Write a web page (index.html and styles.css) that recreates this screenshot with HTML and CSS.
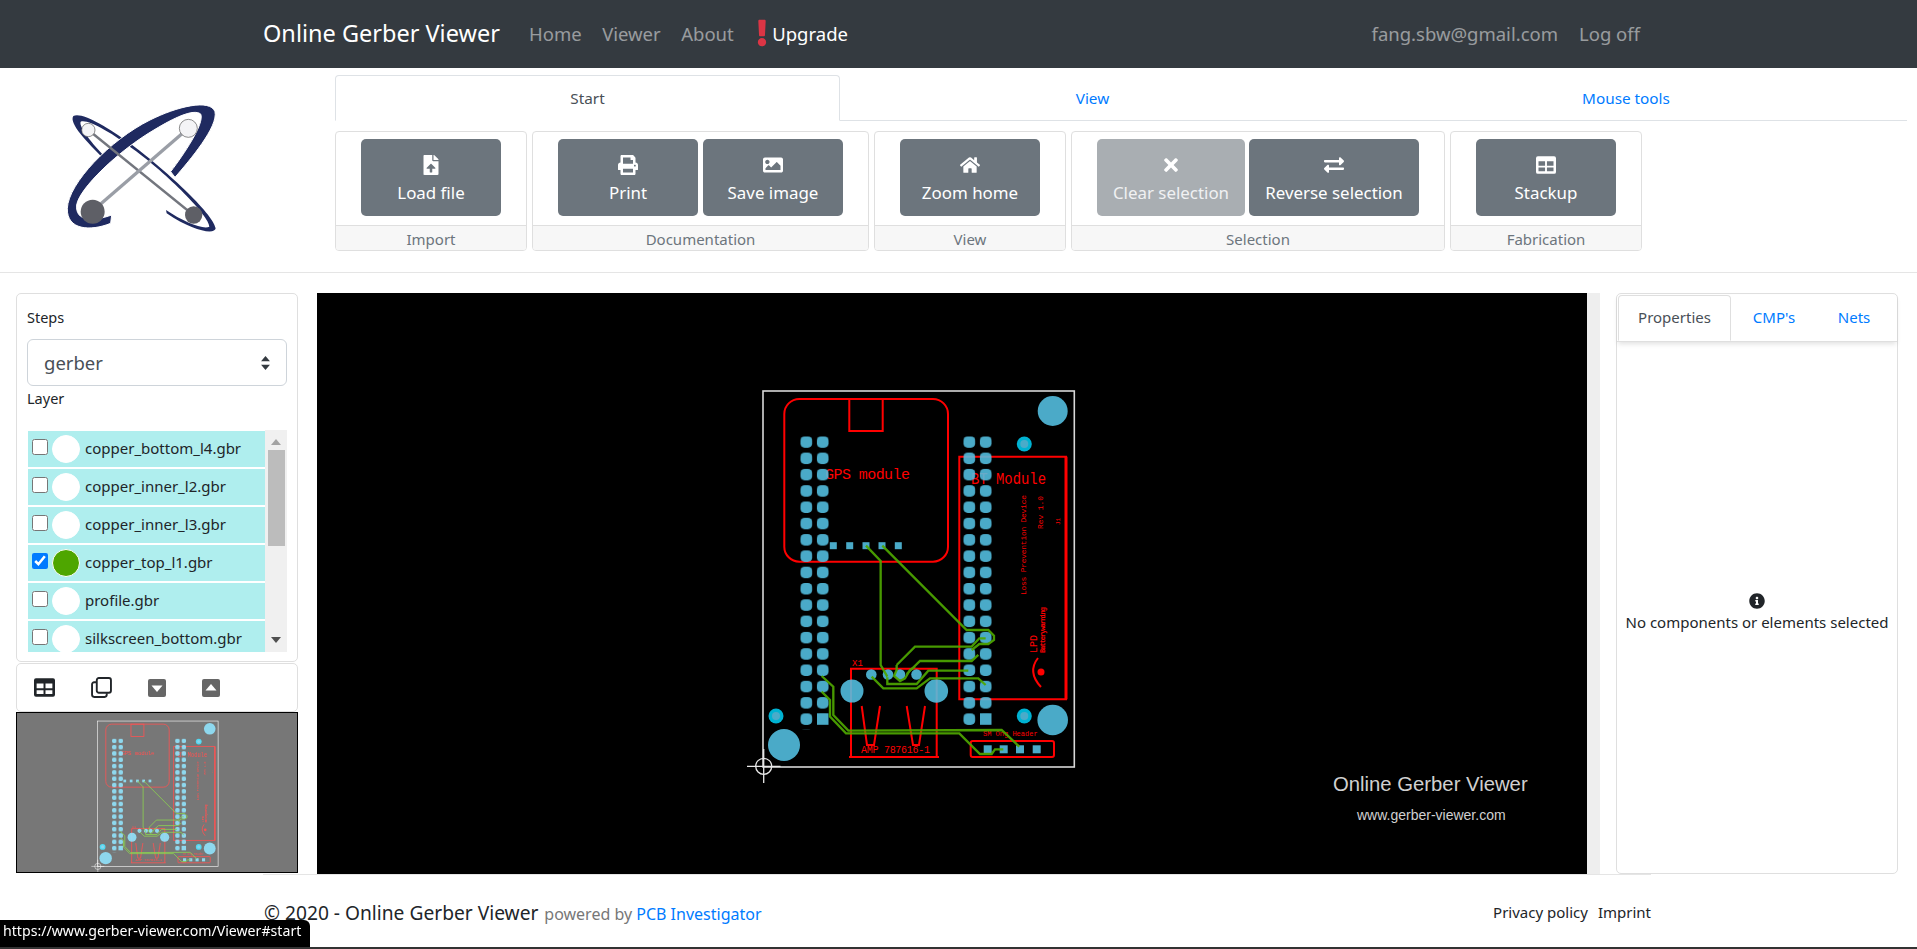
FILE: index.html
```html
<!DOCTYPE html>
<html lang="en">
<head>
  <meta charset="UTF-8">
  <meta name="viewport" content="width=device-width, initial-scale=1.0">
  <title>Online Gerber Viewer</title>
  <link rel="stylesheet" href="styles.css">
</head>
<body>
  <svg class="sprites" width="0" height="0">
    <symbol id="i-table" viewBox="0 0 512 512"><path fill-rule="evenodd" d="M48 32h416a48 48 0 0 1 48 48v352a48 48 0 0 1-48 48H48a48 48 0 0 1-48-48V80a48 48 0 0 1 48-48zM64 160v112h168V160zM280 160v112h168V160zM64 320v96h168v-96zM280 320v96h168v-96z"/></symbol>
  </svg>

  <header class="navbar">
    <a class="brand" href="#">Online Gerber Viewer</a>
    <nav class="nav-links">
      <a href="#">Home</a>
      <a href="#">Viewer</a>
      <a href="#">About</a>
      <a class="upgrade" href="#">
        <svg viewBox="0 0 192 512" width="10" height="28"><path fill="#dc3545" d="M176 432c0 44.112-35.888 80-80 80s-80-35.888-80-80 35.888-80 80-80 80 35.888 80 80zM25.26 25.199l13.6 272C39.499 309.972 50.041 320 62.83 320h66.34c12.789 0 23.331-10.028 23.97-22.801l13.6-272C167.425 11.49 156.496 0 142.77 0H49.23C35.504 0 24.575 11.49 25.26 25.199z"/></svg>
        Upgrade
      </a>
    </nav>
    <nav class="nav-user">
      <a href="#">fang.sbw@gmail.com</a>
      <a href="#">Log off</a>
    </nav>
  </header>

  <section class="toolbar">
    <div class="logo">
      <svg viewBox="0 0 570 480" width="190" height="160">
        <path fill="#1f2a60" d="M160 205C115 160 55 100 70 78C95 65 170 110 240 160C340 235 490 370 497 415C495 435 430 425 350 370L348 360C400 395 460 420 478 410C480 380 350 250 250 178C190 130 110 85 92 95C85 110 130 165 165 200Z"/>
        <path fill="#1f2a60" stroke="#fff" stroke-width="3" d="M185 375L182 400C120 425 50 420 52 355C55 280 180 150 300 90C380 50 480 25 495 65C505 110 420 210 375 262L362 245C400 195 465 100 452 72C430 55 370 85 315 118C205 182 88 295 80 345C75 395 130 395 185 375Z"/>
        <path stroke="#73767e" stroke-width="7" d="M115 120L430 375"/>
        <path stroke="#9a9ea6" stroke-width="10" d="M415 115L125 365"/>
        <circle cx="115" cy="120" r="20" fill="#f4f4f6" stroke="#555" stroke-width="2"/>
        <circle cx="415" cy="115" r="27" fill="#f4f4f6" stroke="#555" stroke-width="2"/>
        <circle cx="128" cy="365" r="36" fill="#5e5f66"/>
        <circle cx="431" cy="375" r="26" fill="#5e5f66"/>
      </svg>
    </div>
    <div class="ribbon">
      <ul class="tabs">
        <li class="tab tab-active">Start</li>
        <li class="tab"><a href="#">View</a></li>
        <li class="tab tab-last"><a href="#">Mouse tools</a></li>
      </ul>
      <div class="groups">
        <div class="group group-import">
          <div class="group-body">
            <button class="tool"><svg class="tool-icon" viewBox="0 0 384 512"><path d="M224 136V0H24C10.7 0 0 10.7 0 24v464c0 13.3 10.7 24 24 24h336c13.3 0 24-10.7 24-24V160H248c-13.2 0-24-10.8-24-24zm65.18 216.01H224v80c0 8.84-7.16 16-16 16h-32c-8.84 0-16-7.16-16-16v-80H94.82c-14.28 0-21.41-17.29-11.27-27.36l96.42-95.7c6.65-6.61 17.39-6.61 24.04 0l96.42 95.7c10.15 10.07 3.03 27.36-11.25 27.36zM377 105L279.1 7c-4.5-4.5-10.6-7-17-7H256v128h128v-6.1c0-6.3-2.5-12.4-7-16.9z"/></svg>Load file</button>
          </div>
          <div class="group-title">Import</div>
        </div>
        <div class="group group-doc">
          <div class="group-body">
            <button class="tool"><svg class="tool-icon" viewBox="0 0 512 512"><path d="M448 192V77.25c0-8.49-3.37-16.62-9.37-22.63L393.37 9.37c-6-6-14.14-9.37-22.63-9.37H96C78.33 0 64 14.33 64 32v160c-35.35 0-64 28.65-64 64v112c0 8.84 7.16 16 16 16h48v96c0 17.67 14.33 32 32 32h320c17.67 0 32-14.33 32-32v-96h48c8.84 0 16-7.16 16-16V256c0-35.35-28.65-64-64-64zm-64 256H128v-96h256v96zm0-224H128V64h192v48c0 8.84 7.16 16 16 16h48v96zm48 72c-13.25 0-24-10.75-24-24 0-13.26 10.75-24 24-24s24 10.74 24 24c0 13.25-10.75 24-24 24z"/></svg>Print</button>
            <button class="tool"><svg class="tool-icon" viewBox="0 0 512 512"><path d="M464 448H48c-26.51 0-48-21.49-48-48V112c0-26.51 21.49-48 48-48h416c26.51 0 48 21.49 48 48v288c0 26.51-21.49 48-48 48zM112 120c-30.928 0-56 25.072-56 56s25.072 56 56 56 56-25.072 56-56-25.072-56-56-56zM64 384h384V272l-87.515-87.515c-4.686-4.686-12.284-4.686-16.971 0L208 320l-55.515-55.515c-4.686-4.686-12.284-4.686-16.971 0L64 336v48z"/></svg>Save image</button>
          </div>
          <div class="group-title">Documentation</div>
        </div>
        <div class="group group-view">
          <div class="group-body">
            <button class="tool"><svg class="tool-icon" viewBox="0 0 576 512"><path d="M280.37 148.26L96 300.11V464a16 16 0 0 0 16 16l112.06-.29a16 16 0 0 0 15.92-16V368a16 16 0 0 1 16-16h64a16 16 0 0 1 16 16v95.64a16 16 0 0 0 16 16.05L464 480a16 16 0 0 0 16-16V300L295.67 148.26a12.19 12.19 0 0 0-15.3 0zM571.6 251.47L488 182.56V44.05a12 12 0 0 0-12-12h-56a12 12 0 0 0-12 12v72.61L318.47 43a48 48 0 0 0-61 0L4.34 251.47a12 12 0 0 0-1.6 16.9l25.5 31A12 12 0 0 0 45.15 301l235.22-193.74a12.19 12.19 0 0 1 15.3 0L530.9 301a12 12 0 0 0 16.9-1.6l25.5-31a12 12 0 0 0-1.7-16.93z"/></svg>Zoom home</button>
          </div>
          <div class="group-title">View</div>
        </div>
        <div class="group group-sel">
          <div class="group-body">
            <button class="tool tool-clear"><svg class="tool-icon" viewBox="0 0 352 512"><path d="M242.72 256l100.07-100.07c12.28-12.28 12.28-32.19 0-44.48l-22.24-22.24c-12.28-12.28-32.19-12.28-44.48 0L176 189.28 75.93 89.21c-12.28-12.28-32.19-12.28-44.48 0L9.21 111.45c-12.28 12.28-12.28 32.19 0 44.48L109.28 256 9.21 356.07c-12.28 12.28-12.28 32.19 0 44.48l22.24 22.24c12.28 12.28 32.2 12.28 44.48 0L176 322.72l100.07 100.07c12.28 12.28 32.2 12.28 44.48 0l22.24-22.24c12.28-12.28 12.28-32.19 0-44.48L242.72 256z"/></svg>Clear selection</button>
            <button class="tool tool-reverse"><svg class="tool-icon" viewBox="0 0 512 512"><path d="M0 168v-16c0-13.255 10.745-24 24-24h360V80c0-21.367 25.899-32.042 40.971-16.971l80 80c9.372 9.373 9.372 24.569 0 33.941l-80 80C409.956 271.982 384 261.456 384 240v-48H24c-13.255 0-24-10.745-24-24zm488 152H128v-48c0-21.314-25.862-32.08-40.971-16.971l-80 80c-9.372 9.373-9.372 24.569 0 33.941l80 80C102.057 463.997 128 453.437 128 432v-48h360c13.255 0 24-10.745 24-24v-16c0-13.255-10.745-24-24-24z"/></svg>Reverse selection</button>
          </div>
          <div class="group-title">Selection</div>
        </div>
        <div class="group group-fab">
          <div class="group-body">
            <button class="tool"><svg class="tool-icon"><use href="#i-table"/></svg>Stackup</button>
          </div>
          <div class="group-title">Fabrication</div>
        </div>
      </div>
    </div>
  </section>

  <main class="workspace">
    <aside class="side-left">
      <div class="card layers-card">
        <div class="field-label">Steps</div>
        <div class="select">
          <span>gerber</span>
          <svg viewBox="0 0 12 18" width="11" height="16"><path fill="#343a40" d="M6 1L11 7H1ZM6 17L1 11H11Z"/></svg>
        </div>
        <div class="field-label layer-label">Layer</div>
        <div class="layer-list">
          <ul class="layers">
            <li class="layer"><input type="checkbox"><span class="swatch"></span>copper_bottom_l4.gbr</li>
            <li class="layer"><input type="checkbox"><span class="swatch"></span>copper_inner_l2.gbr</li>
            <li class="layer"><input type="checkbox"><span class="swatch"></span>copper_inner_l3.gbr</li>
            <li class="layer"><input type="checkbox" checked><span class="swatch swatch-on"></span>copper_top_l1.gbr</li>
            <li class="layer"><input type="checkbox"><span class="swatch"></span>profile.gbr</li>
            <li class="layer"><input type="checkbox"><span class="swatch"></span>silkscreen_bottom.gbr</li>
          </ul>
          <div class="scrollbar">
            <svg viewBox="0 0 10 6" width="10" height="6"><path fill="#a3a3a3" d="M5 0L10 6H0Z"/></svg>
            <div class="scroll-track"><div class="scroll-thumb"></div></div>
            <svg viewBox="0 0 10 6" width="10" height="6"><path fill="#505050" d="M5 6L0 0H10Z"/></svg>
          </div>
        </div>
      </div>
      <div class="card icons-card">
        <svg class="tool-small"><use href="#i-table"/></svg>
        <svg class="tool-small" viewBox="0 0 20 20"><rect x="5.500" y="1" width="13.500" height="14" rx="2" fill="#fff" stroke="#212529" stroke-width="1.800"/><path d="M5 5H3A2 2 0 0 0 1 7V17A2 2 0 0 0 3 19H13A2 2 0 0 0 15 17V15.500" fill="none" stroke="#212529" stroke-width="1.800"/></svg>
        <svg class="tool-small caret" viewBox="0 0 18 18"><rect width="18" height="18" rx="2" fill="#666"/><path fill="#fff" d="M3.500 6.500H14.500L9 13Z"/></svg>
        <svg class="tool-small caret" viewBox="0 0 18 18"><rect width="18" height="18" rx="2" fill="#666"/><path fill="#fff" d="M3.500 11.500H14.500L9 5Z"/></svg>
      </div>
      <div class="minimap">
        <svg class="minimap-pcb" viewBox="555 370.500 723 410"><use href="#pcb"/></svg>
      </div>
    </aside>

    <div class="canvas-wrap">
      <div class="canvas">
        <svg class="board" viewBox="317 293 1270 581" width="1270" height="581">
          <defs>
            <pattern id="pads-left" patternUnits="userSpaceOnUse" x="800.300" y="436.300" width="16.400" height="16.300"><rect class="pad-cell" width="12" height="11.400" rx="4.500"/></pattern>
            <pattern id="pads-right" patternUnits="userSpaceOnUse" x="963.300" y="436.300" width="16.400" height="16.300"><rect class="pad-cell" width="12" height="11.400" rx="4.500"/></pattern>
          </defs>
          <g id="pcb">
            <!-- board outline -->
            <rect x="763" y="391" width="311.300" height="376" fill="none" stroke="#d8d8d8" stroke-width="1.600"/>

            <!-- silkscreen -->
            <g fill="none" stroke="#f00" stroke-width="2">
              <rect x="784.300" y="399" width="163.700" height="162.700" rx="15"/>
              <rect x="849.300" y="399" width="33.400" height="32"/>
              <path d="M959.300 699.300V456.700H1066V699.300Z"/>
              <path d="M1066 456.700V699.300" stroke-width="3"/>
              <path d="M851 757V668.700H936.700V757M849 757H939"/>
              <path d="M861.700 706L867 745H874L880 706M906.700 706L913 745H919L925 706"/>
              <rect x="970.700" y="741" width="83.300" height="16" rx="2"/>
              <path d="M1038 658Q1027 672 1041 687"/>
            </g>
            <circle cx="1041" cy="672" r="3.500" fill="#f00"/>
            <g class="pcb-text">
              <text x="825" y="479" font-size="15" textLength="85" lengthAdjust="spacing">GPS module</text>
              <text x="971" y="484" font-size="17" textLength="75" lengthAdjust="spacingAndGlyphs">BT Module</text>
              <text x="852" y="666" font-size="9">X1</text>
              <text x="861" y="753" font-size="10" textLength="69" lengthAdjust="spacing">AMP 787616-1</text>
              <text x="983" y="736" font-size="7">SM Ong Header</text>
              <text transform="translate(1026 595) rotate(-90)" font-size="8" textLength="100" lengthAdjust="spacing">Loss Prevention Device</text>
              <text transform="translate(1043 529) rotate(-90)" font-size="8" textLength="33" lengthAdjust="spacing">Rev 1.0</text>
              <text transform="translate(1060 525) rotate(-90)" font-size="6">J1</text>
              <text transform="translate(1037 653) rotate(-90)" font-size="10">LPD</text>
              <text transform="translate(1045 653) rotate(-90)" font-size="7" font-weight="700" textLength="46" lengthAdjust="spacing">Batterywarning</text>
            </g>

            <!-- pads -->
            <g class="pads">
              <rect x="800.300" y="436.300" width="12.200" height="293.400" fill="url(#pads-left)"/>
              <rect x="816.700" y="436.300" width="12.200" height="277" fill="url(#pads-left)"/>
              <rect x="963.300" y="436.300" width="12.200" height="293.400" fill="url(#pads-right)"/>
              <rect x="979.700" y="436.300" width="12.200" height="277" fill="url(#pads-right)"/>
              <rect x="817" y="713.300" width="11.500" height="11.500"/>
              <rect x="980" y="713.300" width="11.500" height="11.500"/>
              <rect x="829.800" y="542.200" width="7" height="7"/>
              <rect x="846.200" y="542.200" width="7" height="7"/>
              <rect x="862.500" y="542.200" width="7" height="7"/>
              <rect x="878.500" y="542.200" width="7" height="7"/>
              <rect x="894.800" y="542.200" width="7" height="7"/>
              <rect x="983.700" y="745.300" width="8" height="8"/>
              <rect x="999.700" y="745.300" width="8" height="8"/>
              <rect x="1016" y="745.300" width="8" height="8"/>
              <rect x="1032.700" y="745.300" width="8" height="8"/>
              <circle cx="1052.700" cy="411" r="15"/>
              <circle cx="784" cy="745" r="16"/>
              <circle cx="1052.700" cy="720" r="15.300"/>
              <circle cx="852" cy="691" r="11.500"/>
              <circle cx="936.300" cy="691" r="11.800"/>
              <circle cx="871.300" cy="674.500" r="5.300"/>
              <circle cx="888" cy="674.500" r="5.300"/>
              <circle cx="900" cy="674.500" r="5.300"/>
              <circle cx="916.500" cy="674.500" r="5.300"/>
            </g>
            <g class="vias">
              <circle cx="1024.300" cy="444" r="7.500"/>
              <circle cx="776" cy="716" r="7.500"/>
              <circle cx="1024.300" cy="716" r="7.500"/>
            </g>
            <g class="via-holes">
              <circle cx="1024.300" cy="444" r="4"/>
              <circle cx="776" cy="716" r="4"/>
              <circle cx="1024.300" cy="716" r="4"/>
            </g>

            <!-- copper traces -->
            <g class="traces" transform="translate(740 570) scale(.3333)">
              <path d="M378 -73L422 -27V285L442 320"/>
              <path d="M427 -73L680 180H745L762 197V210L745 222H718L695 240"/>
              <path d="M470 285L525 230H695L718 205H737"/>
              <path d="M500 312L540 273H695L715 255"/>
              <path d="M442 322V342H530L565 302H685"/>
              <path d="M395 320L430 355H530L570 325H715L737 345"/>
              <path d="M470 285V300L462 318L480 333L495 325L510 300L525 290"/>
              <path d="M245 318L280 350V435L325 482L785 480L838 530"/>
              <path d="M245 365L270 390V440L318 490H658L720 552H755L765 538H790"/>
            </g>

            <!-- origin marker -->
            <g fill="none" stroke="#e8e8e8" stroke-width="1.300">
              <circle cx="763.700" cy="766.300" r="8"/>
              <path d="M747 766.300H780.500M763.700 749V783"/>
            </g>
          </g>
          <text class="mark-title" x="1333" y="791">Online Gerber Viewer</text>
          <text class="mark-url" x="1357" y="820">www.gerber-viewer.com</text>
        </svg>
      </div>
      <div class="canvas-scroll"></div>
    </div>

    <aside class="card side-right">
      <ul class="side-tabs">
        <li class="side-tab side-tab-active">Properties</li>
        <li class="side-tab side-tab-cmp"><a href="#">CMP's</a></li>
        <li class="side-tab side-tab-nets"><a href="#">Nets</a></li>
      </ul>
      <div class="no-selection">
        <svg viewBox="0 0 512 512" width="16" height="16"><path fill="#212529" d="M256 8C119.043 8 8 119.083 8 256c0 136.997 111.043 248 248 248s248-111.003 248-248C504 119.083 392.957 8 256 8zm0 110c23.196 0 42 18.804 42 42s-18.804 42-42 42-42-18.804-42-42 18.804-42 42-42zm56 254c0 6.627-5.373 12-12 12h-88c-6.627 0-12-5.373-12-12v-24c0-6.627 5.373-12 12-12h12v-64h-12c-6.627 0-12-5.373-12-12v-24c0-6.627 5.373-12 12-12h64c6.627 0 12 5.373 12 12v100h12c6.627 0 12 5.373 12 12v24z"/></svg>
        <div>No components or elements selected</div>
      </div>
    </aside>
  </main>

  <footer class="footer">
    <div class="footer-left">
      <span class="copyright">© 2020 - Online Gerber Viewer</span>
      <span class="powered">powered by <a href="#">PCB Investigator</a></span>
    </div>
    <div class="footer-right">
      <a href="#">Privacy policy</a>
      <a href="#">Imprint</a>
    </div>
  </footer>

  <div class="status-url">https://www.gerber-viewer.com/Viewer#start</div>
</body>
</html>
```

FILE: styles.css
```css
* {
  box-sizing: border-box;
}
html, body {
  height: 100%;
}
body {
  margin: 0;
  font-family: "Noto Sans", "Open Sans", Arial, sans-serif;
  font-size: 15px;
  color: #212529;
  background: #fff;
  overflow: hidden;
  display: flex;
  flex-direction: column;
  border-bottom: 2px solid #333;
}
a {
  color: #007bff;
  text-decoration: none;
}
ul {
  list-style: none;
  margin: 0;
  padding: 0;
}
.sprites {
  position: absolute;
}

/* navbar */
.navbar {
  height: 68px;
  flex: none;
  background: #343a40;
  display: flex;
  align-items: center;
  padding: 0 277px 2px 263px;
}
.brand {
  color: #fff;
  font-size: 23.500px;
  width: 266px;
}
.nav-links {
  display: flex;
  align-items: center;
  font-size: 18.500px;
}
.nav-links a {
  color: rgba(255, 255, 255, .5);
  margin-right: 20.500px;
}
.nav-links .upgrade {
  color: #fff;
  display: flex;
  align-items: center;
  gap: 5px;
  margin-left: 3px;
}
.nav-user {
  margin-left: auto;
  display: flex;
  gap: 21px;
  font-size: 18.500px;
}
.nav-user a {
  color: rgba(255, 255, 255, .5);
}

/* toolbar */
.toolbar {
  height: 205px;
  flex: none;
  display: flex;
  border-bottom: 1px solid #e5e5e5;
}
.logo {
  width: 335px;
  padding: 22px 0 0 50px;
}
.ribbon {
  width: 1572px;
  padding-top: 7px;
}
.tabs {
  display: flex;
  height: 46px;
  border-bottom: 1px solid #dee2e6;
  font-size: 15.300px;
}
.tab {
  width: 505px;
  display: flex;
  align-items: center;
  justify-content: center;
}
.tab-last {
  flex: 1;
}
.tab-active {
  height: 46px;
  color: #495057;
  background: #fff;
  border: 1px solid #dee2e6;
  border-bottom-color: #fff;
  border-radius: 4px 4px 0 0;
}
.groups {
  display: flex;
  gap: 5px;
  margin-top: 10px;
}
.group {
  height: 120px;
  border: 1px solid #dfdfdf;
  border-radius: 4px;
  display: flex;
  flex-direction: column;
  overflow: hidden;
}
.group-import, .group-view, .group-fab {
  width: 192px;
}
.group-doc {
  width: 337px;
}
.group-sel {
  width: 374px;
}
.group-body {
  height: 93px;
  padding-top: 7px;
  display: flex;
  justify-content: center;
  gap: 5px;
}
.group-title {
  flex: 1;
  display: flex;
  align-items: center;
  justify-content: center;
  padding-top: 2px;
  border-top: 1px solid #dfdfdf;
  background: #f7f7f7;
  color: #6c757d;
  font-size: 15px;
}
.tool {
  width: 140px;
  height: 77px;
  border: none;
  border-radius: 5px;
  background: #6c757d;
  color: #fff;
  font-family: inherit;
  font-size: 16.900px;
  padding: 0;
  display: flex;
  flex-direction: column;
  align-items: center;
}
.tool-icon {
  width: 20px;
  height: 20px;
  margin: 16px 0 6px;
  fill: #fff;
}
.tool-clear {
  width: 148px;
  background: #a9aeb2;
  color: #f0f1f2;
  margin-right: -1px;
}
.tool-reverse {
  width: 170px;
}

/* workspace */
.workspace {
  flex: none;
  height: 581px;
  margin-top: 20px;
  padding-left: 16px;
  display: flex;
}
.card {
  background: #fff;
  border: 1px solid #dfdfdf;
  border-radius: 5px;
}
.side-left {
  width: 282px;
  display: flex;
  flex-direction: column;
}
.layers-card {
  height: 369px;
  padding: 0 10px 0 10px;
  margin-bottom: 1px;
}
.field-label {
  font-size: 14.500px;
  line-height: 20px;
  margin-top: 13px;
}
.select {
  height: 47px;
  margin-top: 12px;
  padding: 0 15px 0 16px;
  border: 1px solid #ced4da;
  border-radius: 6px;
  display: flex;
  align-items: center;
  justify-content: space-between;
  color: #495057;
  font-size: 18.500px;
}
.layer-label {
  margin-top: 2px;
}
.layer-list {
  height: 222px;
  margin-top: 22px;
  margin-left: 1px;
  display: flex;
  overflow: hidden;
}
.layers {
  width: 237px;
  padding-top: 1px;
}
.layer {
  height: 36px;
  margin-bottom: 2px;
  padding-bottom: 2px;
  background: paleturquoise;
  display: flex;
  align-items: center;
  font-size: 15px;
  color: #212529;
}
.layer input {
  width: 16px;
  height: 16px;
  margin: -2px 4px 0 4px;
  accent-color: #007bff;
}
.swatch {
  width: 28px;
  height: 28px;
  margin: 2px 5px 0 0;
  border-radius: 50%;
  background: #fff;
  border: 1px solid #fff;
}
.swatch-on {
  background: #4ea600;
}
.scrollbar {
  width: 22px;
  background: #f0f0f0;
  display: flex;
  flex-direction: column;
  align-items: center;
}
.scrollbar svg {
  flex: none;
  margin: 9px 0;
}
.scroll-track {
  flex: 1;
  width: 17px;
  margin: -4px 0;
}
.scroll-thumb {
  height: 96px;
  background: #bcbcbc;
}
.icons-card {
  height: 49px;
  padding: 0 0 0 17px;
  display: flex;
  align-items: center;
  gap: 36px;
}
.tool-small {
  width: 21px;
  height: 21px;
  fill: #212529;
}
.caret {
  width: 18px;
  height: 18px;
}
.minimap {
  height: 161px;
  width: 282px;
  background: #777;
  border: 1px solid #000;
}
.minimap-pcb {
  display: block;
  width: 280px;
  height: 159px;
  filter: contrast(.55) brightness(1.4);
}
.canvas-wrap {
  margin-left: 19px;
  width: 1283px;
  display: flex;
}
.canvas {
  width: 1270px;
  background: #000;
}
.board {
  display: block;
}
.canvas-scroll {
  width: 13px;
  background: #eee;
}
.pcb-text text {
  font-family: "Liberation Mono", monospace;
  fill: #f00;
}
.pads {
  fill: #55c2e4;
  opacity: .88;
}
.pad-cell {
  fill: #55c2e4;
}
.vias {
  fill: #00b2d2;
}
.via-holes {
  fill: #4babc9;
}
.traces {
  fill: none;
  stroke: #4ea600;
  stroke-width: 7;
  opacity: .92;
}
.mark-title {
  font-family: "Liberation Sans", Arial, sans-serif;
  font-size: 20.300px;
  fill: #d0d0d0;
}
.mark-url {
  font-family: "Liberation Sans", Arial, sans-serif;
  font-size: 14px;
  fill: #d0d0d0;
}
.side-right {
  width: 282px;
  margin-left: 16px;
  display: flex;
  flex-direction: column;
}
.side-tabs {
  display: flex;
  height: 47px;
  margin-top: 1px;
  padding-bottom: 2px;
  border-bottom: 1px solid #dfdfdf;
  box-shadow: 0 3px 5px -1px rgba(0, 0, 0, .12);
  font-size: 15px;
}
.side-tab {
  display: flex;
  align-items: center;
  justify-content: center;
}
.side-tab-active {
  width: 113px;
  margin-left: 1px;
  height: 46px;
  padding-bottom: 2px;
  color: #495057;
  border: 1px solid #dfdfdf;
  border-bottom-color: #fff;
  border-radius: 4px 4px 0 0;
}
.side-tab-cmp {
  width: 86px;
}
.side-tab-nets {
  width: 74px;
}
.no-selection {
  flex: 1;
  display: flex;
  flex-direction: column;
  align-items: center;
  justify-content: center;
  gap: 3px;
  padding-top: 10px;
  font-size: 15px;
  white-space: nowrap;
}

/* footer */
.footer {
  height: 73px;
  margin: 0 0 0 263px;
  width: 1388px;
  border-top: 1px solid #e5e5e5;
  display: flex;
  align-items: center;
  justify-content: space-between;
  padding: 2px 0 0 1px;
}
.copyright {
  font-size: 19.200px;
}
.powered {
  font-size: 16px;
  color: #777;
  margin-left: 2px;
}
.footer-right {
  display: flex;
  gap: 10px;
  font-size: 15px;
}
.footer-right a {
  color: #212529;
}

/* browser status bubble */
.status-url {
  position: fixed;
  left: 0;
  bottom: 2px;
  height: 27px;
  width: 310px;
  padding: 1px 0 0 3px;
  background: #000;
  color: #fff;
  font-size: 14.150px;
  white-space: nowrap;
  border-radius: 0 6px 0 0;
}
```
